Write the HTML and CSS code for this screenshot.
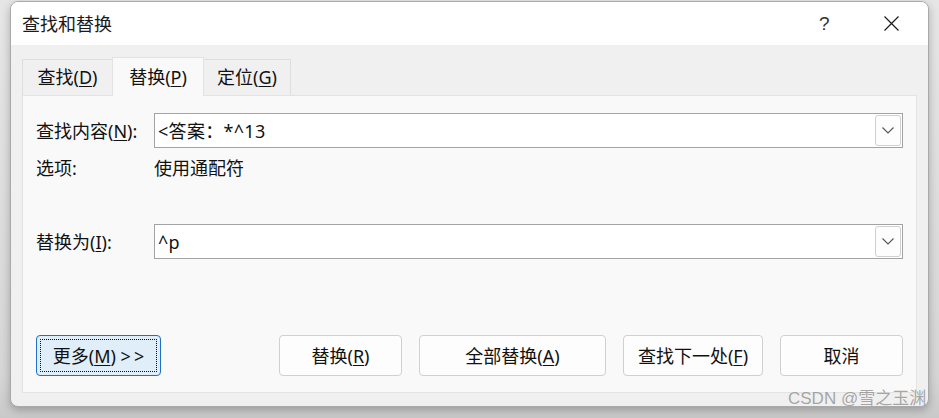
FILE: index.html
```html
<!DOCTYPE html>
<html lang="zh-CN">
<head>
<meta charset="utf-8">
<title>查找和替换</title>
<link rel="stylesheet" href="styles.css">
</head>
<body>
<div class="window">
  <div class="titlebar">
    <span class="title">查找和替换</span>
    <span class="help">?</span>
    <span class="close">
      <svg width="15" height="15" viewBox="0 0 15 15"><path d="M0.5 0.5 L14.5 14.5 M14.5 0.5 L0.5 14.5" stroke="#1a1a1a" stroke-width="1.2" fill="none"/></svg>
    </span>
  </div>
  <div class="content">
    <div class="tabs">
      <div class="tab t1">查找(<u>D</u>)</div>
      <div class="tab t2 active">替换(<u>P</u>)</div>
      <div class="tab t3">定位(<u>G</u>)</div>
    </div>
    <div class="panel">
      <div class="row">
        <label class="label">查找内容(<u>N</u>):</label>
        <div class="combo">
          <span class="value">&lt;答案：*^13</span>
          <span class="drop"><svg width="12" height="7" viewBox="0 0 12 7"><path d="M0.5 0.5 L6 6 L11.5 0.5" stroke="#555" stroke-width="1.1" fill="none"/></svg></span>
        </div>
      </div>
      <div class="row options">
        <span class="label">选项:</span>
        <span class="optval">使用通配符</span>
      </div>
      <div class="row replace">
        <label class="label">替换为(<u>I</u>):</label>
        <div class="combo">
          <span class="value">^p</span>
          <span class="drop"><svg width="12" height="7" viewBox="0 0 12 7"><path d="M0.5 0.5 L6 6 L11.5 0.5" stroke="#555" stroke-width="1.1" fill="none"/></svg></span>
        </div>
      </div>
      <div class="buttons">
        <button class="btn more"><span class="focus">更多(<u>M</u>)&nbsp;<span class="arrows">&gt;&gt;</span></span></button>
        <div class="right">
          <button class="btn w-rep">替换(<u>R</u>)</button>
          <button class="btn w-all">全部替换(<u>A</u>)</button>
          <button class="btn w-next">查找下一处(<u>F</u>)</button>
          <button class="btn w-cancel">取消</button>
        </div>
      </div>
    </div>
  </div>
</div>
<div class="watermark">CSDN @雪之玉渊</div>
</body>
</html>
```
FILE: styles.css
```css
* { box-sizing: border-box; }
html, body { margin: 0; padding: 0; }
body {
  position: relative;
  background: linear-gradient(#e6e6e6, #d6d6d6 90%, #c9c9c9);
  width: 939px;
  height: 418px;
  overflow: hidden;
  font-family: "Noto Sans", "Noto Sans CJK SC", sans-serif;
  color: #111;
}
.window {
  position: relative;
  margin: 1px 0 0 10px;
  width: 919px;
  height: 406px;
  border: 1px solid #a9a9a9;
  border-radius: 8px;
  background: #f0f0f0;
  box-shadow: 0 3px 8px rgba(0,0,0,0.25);
  overflow: hidden;
}
.titlebar {
  height: 43px;
  background: #fff;
  display: flex;
  align-items: center;
  padding-left: 11px;
}
.title {
  font-size: 18px;
  line-height: 24px;
  flex: 1;
  color: #1a1a1a;
}
.help {
  font-size: 19px;
  line-height: 24px;
  color: #333;
  width: 12px;
  margin-right: 53px;
  font-family: "Liberation Sans", sans-serif;
}
.close {
  display: flex;
  margin-right: 29px;
}
.content {
  padding: 12px 11px 0 11px;
}
.tabs {
  display: flex;
  align-items: flex-end;
  height: 38px;
}
.tab {
  height: 36px;
  border: 1px solid #dedede;
  border-bottom: none;
  background: #f0f0f0;
  font-size: 18px;
  line-height: 35px;
  text-align: center;
  color: #111;
  white-space: nowrap;
}
.t1 { width: 90px; border-right: none; }
.t2 { width: 92px; }
.t3 { width: 87px; border-left: none; }
.tab.active {
  height: 39px;
  margin-bottom: -1px;
  background: #f9f9f9;
  border-color: #e3e3e3;
  position: relative;
  z-index: 1;
  line-height: 38px;
}
u { text-decoration-thickness: 1px; text-underline-offset: 2px; }
.panel {
  height: 298px;
  background: #f9f9f9;
  border: 1px solid #e3e3e3;
  padding: 17px 13px 16px 13px;
}
.row {
  display: flex;
  align-items: center;
  height: 35px;
}
.label {
  width: 118px;
  font-size: 18px;
  line-height: 24px;
  white-space: nowrap;
}
.combo {
  flex: 1;
  height: 35px;
  border: 1px solid #a3a3a3;
  background: #fff;
  display: flex;
  align-items: center;
  padding: 1px 1px 1px 3px;
}
.value {
  flex: 1;
  font-size: 18px;
  line-height: 24px;
  color: #111;
  letter-spacing: 0.3px;
}
.drop {
  width: 26px;
  height: 31px;
  border: 1px solid #d0d0d0;
  border-radius: 3px;
  background: #fdfdfd;
  display: flex;
  align-items: center;
  justify-content: center;
}
.options {
  margin-top: 8px;
  height: 24px;
}
.optval {
  font-size: 18px;
  line-height: 24px;
}
.replace { margin-top: 44px; }
.buttons {
  margin-top: 76px;
  display: flex;
  height: 41px;
}
.right {
  margin-left: auto;
  display: flex;
  gap: 17px;
}
.btn {
  height: 41px;
  border: 1px solid #d0d0d0;
  border-radius: 4px;
  background: #fdfdfd;
  font-family: "Noto Sans", "Noto Sans CJK SC", sans-serif;
  font-size: 18px;
  line-height: 24px;
  color: #111;
  padding: 0;
  white-space: nowrap;
}
.more {
  width: 125px;
  border-color: #1a73c9;
  background: #e0eef9;
  padding: 3px;
}
.focus {
  display: flex;
  height: 100%;
  align-items: center;
  justify-content: center;
  border: 1px dotted #111;
  border-radius: 1px;
}
.arrows { letter-spacing: 3px; margin-right: -3px; }
.w-rep { width: 123px; }
.w-all { width: 187px; }
.w-next { width: 140px; }
.w-cancel { width: 123px; }
.watermark {
  position: absolute;
  left: 788px;
  top: 388px;
  font-size: 17px;
  line-height: 22px;
  color: rgba(140,140,140,0.75);
  font-family: "Liberation Sans", "Noto Sans CJK SC", sans-serif;
  white-space: nowrap;
}
```
